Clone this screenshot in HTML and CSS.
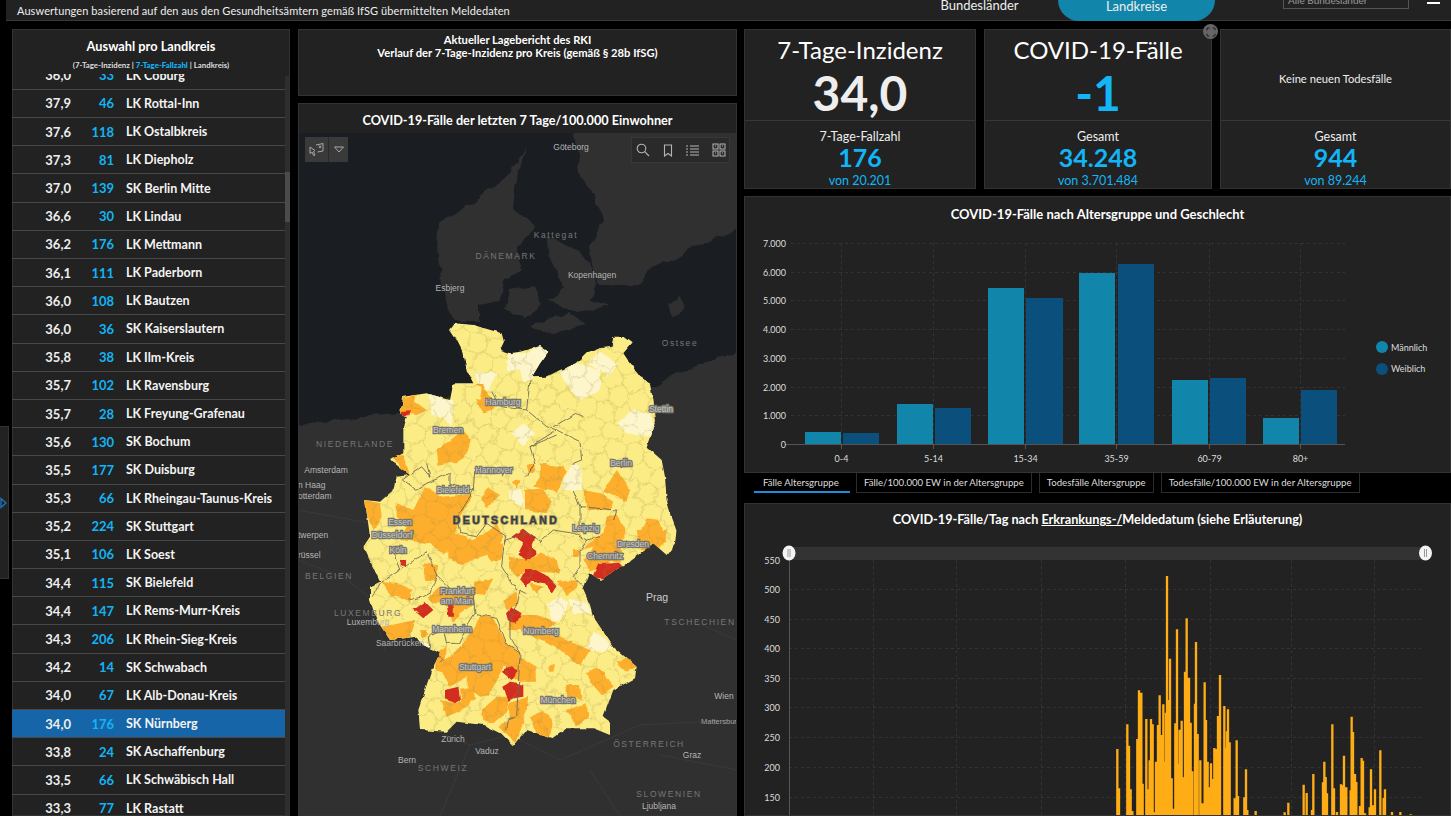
FILE: index.html
```html
<!DOCTYPE html>
<html lang="de">
<head>
<meta charset="utf-8">
<title>COVID-19 Dashboard</title>
<link rel="stylesheet" href="styles.css">
</head>
<body>
<header class="topbar">
  <p class="topbar-text">Auswertungen basierend auf den aus den Gesundheitsämtern gemäß IfSG übermittelten Meldedaten</p>
  <nav class="switch">
    <span class="switch-item">Bundesländer</span>
    <span class="switch-item switch-active">Landkreise</span>
  </nav>
  <div class="select-box">Alle Bundesländer</div>
  <div class="burger"></div>
</header>

<div class="side-tab"><svg width="8" height="12" viewBox="0 0 8 12"><path d="M1 1.500L6 6L1 10.500Z" fill="none" stroke="#1f74c0" stroke-width="1.300"/></svg></div>

<main class="layout">
  <section class="panel list-panel">
    <div class="list-head">
      <h2>Auswahl pro Landkreis</h2>
      <p>(7-Tage-Inzidenz | <b>7-Tage-Fallzahl</b> | Landkreis)</p>
    </div>
    <div class="list-body">
      <div class="rows">
        <div class="rows-inner">
          <div class="row"><span class="r-a">36,0</span><span class="r-b">33</span><span class="r-c">LK Coburg</span></div>
          <div class="row"><span class="r-a">37,9</span><span class="r-b">46</span><span class="r-c">LK Rottal-Inn</span></div>
          <div class="row"><span class="r-a">37,6</span><span class="r-b">118</span><span class="r-c">LK Ostalbkreis</span></div>
          <div class="row"><span class="r-a">37,3</span><span class="r-b">81</span><span class="r-c">LK Diepholz</span></div>
          <div class="row"><span class="r-a">37,0</span><span class="r-b">139</span><span class="r-c">SK Berlin Mitte</span></div>
          <div class="row"><span class="r-a">36,6</span><span class="r-b">30</span><span class="r-c">LK Lindau</span></div>
          <div class="row"><span class="r-a">36,2</span><span class="r-b">176</span><span class="r-c">LK Mettmann</span></div>
          <div class="row"><span class="r-a">36,1</span><span class="r-b">111</span><span class="r-c">LK Paderborn</span></div>
          <div class="row"><span class="r-a">36,0</span><span class="r-b">108</span><span class="r-c">LK Bautzen</span></div>
          <div class="row"><span class="r-a">36,0</span><span class="r-b">36</span><span class="r-c">SK Kaiserslautern</span></div>
          <div class="row"><span class="r-a">35,8</span><span class="r-b">38</span><span class="r-c">LK Ilm-Kreis</span></div>
          <div class="row"><span class="r-a">35,7</span><span class="r-b">102</span><span class="r-c">LK Ravensburg</span></div>
          <div class="row"><span class="r-a">35,7</span><span class="r-b">28</span><span class="r-c">LK Freyung-Grafenau</span></div>
          <div class="row"><span class="r-a">35,6</span><span class="r-b">130</span><span class="r-c">SK Bochum</span></div>
          <div class="row"><span class="r-a">35,5</span><span class="r-b">177</span><span class="r-c">SK Duisburg</span></div>
          <div class="row"><span class="r-a">35,3</span><span class="r-b">66</span><span class="r-c">LK Rheingau-Taunus-Kreis</span></div>
          <div class="row"><span class="r-a">35,2</span><span class="r-b">224</span><span class="r-c">SK Stuttgart</span></div>
          <div class="row"><span class="r-a">35,1</span><span class="r-b">106</span><span class="r-c">LK Soest</span></div>
          <div class="row"><span class="r-a">34,4</span><span class="r-b">115</span><span class="r-c">SK Bielefeld</span></div>
          <div class="row"><span class="r-a">34,4</span><span class="r-b">147</span><span class="r-c">LK Rems-Murr-Kreis</span></div>
          <div class="row"><span class="r-a">34,3</span><span class="r-b">206</span><span class="r-c">LK Rhein-Sieg-Kreis</span></div>
          <div class="row"><span class="r-a">34,2</span><span class="r-b">14</span><span class="r-c">SK Schwabach</span></div>
          <div class="row"><span class="r-a">34,0</span><span class="r-b">67</span><span class="r-c">LK Alb-Donau-Kreis</span></div>
          <div class="row row-selected"><span class="r-a">34,0</span><span class="r-b">176</span><span class="r-c">SK Nürnberg</span></div>
          <div class="row"><span class="r-a">33,8</span><span class="r-b">24</span><span class="r-c">SK Aschaffenburg</span></div>
          <div class="row"><span class="r-a">33,5</span><span class="r-b">66</span><span class="r-c">LK Schwäbisch Hall</span></div>
          <div class="row"><span class="r-a">33,3</span><span class="r-b">77</span><span class="r-c">LK Rastatt</span></div>
        </div>
      </div>
      <div class="scrolltrack"><div class="scrollthumb"></div></div>
    </div>
  </section>

  <div class="mid">
    <section class="panel report">
      <p>Aktueller Lagebericht des RKI</p>
      <p>Verlauf der 7-Tage-Inzidenz pro Kreis (gemäß § 28b IfSG)</p>
    </section>
    <section class="panel map-panel">
      <h2 class="map-title">COVID-19-Fälle der letzten 7 Tage/100.000 Einwohner</h2>
      <div class="map">
        <svg class="map-svg" viewBox="298 133 439 683" width="439" height="683">
          <defs>
            <clipPath id="de"><path d="M285 10L340 15L425 40L432 65L420 90L450 100L480 95L540 78L565 95L540 130L515 172L560 170L600 150L650 130L680 100L720 85L755 80L760 50L790 50L815 70L790 100L810 130L840 170L870 190L880 240L888 300L870 350L860 380L905 420L915 470L920 540L935 590L950 630L945 670L920 705L880 670L800 730L720 780L690 760L670 810L690 855L700 890L760 980L830 1040L825 1075L760 1110L730 1190L750 1205L750 1245L700 1225L620 1225L580 1255L500 1230L460 1280L420 1240L370 1215L290 1205L260 1235L180 1230L175 1170L215 1050L240 1000L190 975L170 950L90 960L50 900L30 840L30 800L60 785L10 680L30 650L15 540L60 545L100 510L110 470L150 465L90 420L130 400L130 330L140 290L120 280L130 230L200 220L270 240L280 190L340 190L320 150L310 100L290 60L270 30Z"/></clipPath>
            <pattern id="mesh" width="60" height="104" patternUnits="userSpaceOnUse" patternTransform="rotate(14)">
              <path class="mesh-line" d="M30 0L60 17V52L30 69L0 52V17ZM30 69V104"/>
            </pattern>
            <filter id="wiggle" filterUnits="userSpaceOnUse" x="-60" y="-60" width="1120" height="1420" color-interpolation-filters="sRGB">
              <feTurbulence type="fractalNoise" baseFrequency=".035" numOctaves="2" seed="4" result="n"/>
              <feDisplacementMap in="SourceGraphic" in2="n" scale="12" xChannelSelector="R" yChannelSelector="G"/>
            </filter>
            <filter id="wiggle-big" filterUnits="userSpaceOnUse" x="-60" y="-60" width="1120" height="1420" color-interpolation-filters="sRGB">
              <feTurbulence type="fractalNoise" baseFrequency=".03" numOctaves="3" seed="9" result="n"/>
              <feDisplacementMap in="SourceGraphic" in2="n" scale="34" xChannelSelector="R" yChannelSelector="G"/>
            </filter>
            <filter id="coast" filterUnits="userSpaceOnUse" x="280" y="120" width="470" height="710" color-interpolation-filters="sRGB">
              <feTurbulence type="fractalNoise" baseFrequency=".06" numOctaves="3" seed="2" result="n"/>
              <feDisplacementMap in="SourceGraphic" in2="n" scale="9" xChannelSelector="R" yChannelSelector="G"/>
            </filter>
          </defs>
          <rect class="water" x="298" y="133" width="439" height="683"/>
          <g filter="url(#coast)">
            <path class="land" d="M280 428L400 412L460 395L640 400L653 387L690 367L760 345V830H280Z"/>
            <path class="land" d="M453 318L445 300L438 260L439 222L470 205L496 187L515 165L526 146L518 170L513 207L536 227L516 247L523 270L505 278L500 300L480 305L480 322L460 322Z"/>
            <path class="land" d="M573 120H760V220L700 245L650 268L640 285L598 285L594 275L589 245L606 220L590 190L579 173Z"/>
            <path class="land" d="M546 238L572 248L590 262L596 285L590 300L612 306L570 312L548 300L562 285L552 262Z"/>
            <path class="land" d="M510 290L535 286L542 305L525 318L506 310Z"/>
            <path class="land" d="M530 324L570 314L585 324L545 334Z"/>
            <path class="land" d="M668 305L680 295L684 310L672 318Z"/>
          </g>
          <path class="border" d="M298 560L345 578L372 600L385 650M298 510L380 525M420 725L470 745L510 735L560 760L640 725L737 720M690 620L737 640M660 755L737 770M470 745L440 816M590 770L620 816"/>
          <g transform="translate(360 320) scale(.33333)">
            <g filter="url(#wiggle)">
              <g clip-path="url(#de)">
                <rect class="y" x="0" y="0" width="990" height="1300"/>
                <g class="cream">
                  <path d="M350 155L410 160L385 210L350 190Z"/>
                  <path d="M445 100L500 100L545 75L565 95L520 175L490 185L480 150L440 155Z"/>
                  <path d="M600 155L650 130L720 150L720 210L660 240L610 180Z"/>
                  <path d="M680 130L720 95L775 130L740 170L720 150Z"/>
                  <path d="M205 220L235 225L250 240L280 240L275 320L250 290L215 285Z"/>
                  <path d="M455 340L490 310L525 340L490 380Z"/>
                  <path d="M610 475L640 430L665 440L665 510L610 510Z"/>
                  <path d="M770 310L820 270L870 280L885 330L860 350L800 340Z"/>
                  <path d="M445 510L480 505L500 565L445 535Z"/>
                  <path d="M160 950L190 960L215 985L185 995L170 970Z"/>
                  <path d="M560 855L600 830L625 850L600 905L575 900Z"/>
                  <path d="M625 840L680 845L695 880L640 880Z"/>
                  <path d="M675 990L705 935L760 980L725 995Z"/>
                </g>
                <g class="o">
                  <path d="M120 280L130 235L170 225L165 245L200 270L170 285Z"/>
                  <path d="M340 195L365 205L360 235L345 240L370 280L400 270L415 245L385 225L370 195Z"/>
                  <path d="M230 385L265 365L290 345L300 320L335 360L320 400L290 430L255 430L235 435Z"/>
                  <path d="M90 410L130 405L150 465L130 465L115 430Z"/>
                  <path d="M500 435L525 430L520 460L505 455Z"/>
                  <path d="M455 485L480 480L470 505Z"/>
                  <path d="M540 430L610 440L620 455L590 520L575 510L520 500L540 470Z"/>
                  <path d="M495 510L550 505L575 545L560 580L495 570Z"/>
                  <path d="M670 510L720 520L760 545L750 570L680 570Z"/>
                  <path d="M770 450L800 490L810 510L800 545L730 515Z"/>
                  <path d="M860 595L900 600L920 670L830 660Z"/>
                  <path d="M15 540L60 550L65 590L45 630L30 610L20 580Z"/>
                  <path d="M110 550L160 570L195 500L250 530L340 520L300 590L285 640L340 660L390 630L410 610L430 650L400 700L330 720L265 690L250 700L205 670L120 660L140 620L110 590Z"/>
                  <path d="M360 530L385 505L420 525L380 565Z"/>
                  <path d="M740 590L770 580L800 640L770 690L740 740L680 720L700 680L660 690L730 640Z"/>
                  <path d="M640 690L660 690L655 710L640 710Z"/>
                </g>
                <g class="o" transform="translate(0 630)">
                  <path d="M265 55L340 55L340 90L300 105L265 85Z"/>
                  <path d="M380 45L430 40L425 85L390 95Z"/>
                  <path d="M190 100L235 105L225 150L195 155Z"/>
                  <path d="M65 155L130 165L155 180L150 220L120 200L90 195Z"/>
                  <path d="M345 155L400 145L375 195L340 190Z"/>
                  <path d="M205 205L240 170L345 185L340 220L300 250L280 280L255 220L220 220Z"/>
                  <path d="M430 210L470 185L475 225L440 240Z"/>
                  <path d="M450 80L500 90L540 70L590 90L600 130L540 125L490 125L470 145L450 115Z"/>
                  <path d="M590 155L650 150L650 175L620 195Z"/>
                  <path d="M505 160L550 170L530 190Z"/>
                  <path d="M450 255L530 255L590 275L560 300L590 310L640 340L690 360L660 410L600 360L560 340L520 320L480 300L445 300Z"/>
                  <path d="M60 290L120 280L165 270L150 320L120 340L80 325Z"/>
                  <path d="M180 300L200 300L205 315L185 320Z"/>
                  <path d="M360 255L400 265L440 340L480 370L470 420L430 410L385 500L360 500L320 470L320 440L270 470L250 430L240 400L270 380L300 350L320 330L345 290Z"/>
                  <path d="M230 370L260 350L255 430L225 420Z"/>
                  <path d="M480 380L530 410L530 455L480 455L460 440Z"/>
                  <path d="M410 500L445 500L445 540L400 580L370 570L365 540Z"/>
                  <path d="M445 520L505 500L500 540L470 640L440 615L415 590L450 570Z"/>
                  <path d="M240 510L290 520L340 490L325 530L285 550L260 560Z"/>
                  <path d="M300 480L340 470L345 510L305 515Z"/>
                  <path d="M510 560L545 545L580 570L570 620L530 610Z"/>
                  <path d="M620 540L680 520L685 560L650 590Z"/>
                  <path d="M615 465L660 465L665 510L620 500Z"/>
                  <path d="M680 430L710 410L735 430L760 470L725 495L695 460Z"/>
                  <path d="M770 395L805 380L830 410L800 425Z"/>
                  <path d="M565 410L585 405L580 425L568 425Z"/>
                  <path d="M670 85L710 70L725 110L690 125Z"/>
                  <path d="M710 20L750 10L790 70L785 95L710 90Z"/>
                  <path d="M830 0L920 0L915 40L880 70L840 60Z"/>
                  <path d="M640 60L655 60L655 80L640 80Z"/>
                </g>
                <g class="r" transform="translate(0 630)">
                  <path d="M455 20L490 -5L525 20L515 45L530 70L500 95L475 70L490 40Z"/>
                  <path d="M480 150L495 120L530 120L560 135L590 165L575 188L555 160L510 155L500 175Z"/>
                  <path d="M695 145L715 100L780 95L795 110L730 145Z"/>
                  <path d="M160 240L195 215L220 240L190 265Z"/>
                  <path d="M260 215L280 215L282 260L265 260Z"/>
                  <path d="M438 250L455 232L485 250L470 278L445 275Z"/>
                  <path d="M425 425L450 410L475 420L455 450Z"/>
                  <path d="M430 470L455 455L490 465L490 500L460 505L445 512Z"/>
                  <path d="M255 480L295 470L300 510L285 520L255 505Z"/>
                  <path d="M122 90L138 90L138 110L122 110Z"/>
                </g>
                <path class="red-single" d="M122 276L150 274L145 286L125 286Z"/>
                <path class="red-single" d="M785 430L795 430L795 445L785 445Z"/>
                <g filter="url(#wiggle-big)">
                  <rect x="-60" y="-60" width="1120" height="1420" fill="url(#mesh)"/>
                </g>
                <path class="state" d="M395 215L420 260L500 270L560 320L590 330L660 365L665 420L640 430M500 270L510 180M590 330L510 380L525 430L500 470M510 380L590 345M670 290L650 280L580 320M640 510L660 560L770 570L760 600M660 560L660 620M200 430L210 470L185 440L130 480L170 510L200 490L270 460L270 490L340 510L345 440M340 510L290 590L300 640L350 650L380 610L440 650L430 690"/>
                <path class="state" transform="translate(0 630)" d="M430 60L440 30L500 5L540 35L580 0L640 10L680 30L720 20M680 30L660 60L660 110L640 140L680 180M430 60L425 110L470 180M100 70L120 120L60 160L40 200M120 120L200 65L230 135L210 190L190 200L145 210M230 135L270 175L340 195L345 250L320 290L300 340L260 340L250 300L205 320L210 360L250 390L240 400M345 250L365 255L410 265L440 340L480 370L470 560L445 570L440 600M480 370L450 320L450 260L470 230L480 180L500 190"/>
              </g>
            </g>
          </g>
          <text class="lbl" x="571" y="150" text-anchor="middle">Göteborg</text>
          <text class="lbl-c" x="556" y="238" text-anchor="middle">Kattegat</text>
          <text class="lbl-c" x="506" y="259" text-anchor="middle">DÄNEMARK</text>
          <text class="lbl" x="592" y="278" text-anchor="middle">Kopenhagen</text>
          <text class="lbl" x="450" y="291" text-anchor="middle">Esbjerg</text>
          <text class="lbl-c" x="680" y="346" text-anchor="middle">Ostsee</text>
          <text class="lbl-h" x="503" y="405" text-anchor="middle">Hamburg</text>
          <text class="lbl-h" x="661" y="412" text-anchor="middle">Stettin</text>
          <text class="lbl-h" x="448" y="433" text-anchor="middle">Bremen</text>
          <text class="lbl-c" x="355" y="447" text-anchor="middle">NIEDERLANDE</text>
          <text class="lbl-h" x="621" y="466" text-anchor="middle">Berlin</text>
          <text class="lbl-h" x="494" y="473" text-anchor="middle">Hannover</text>
          <text class="lbl" x="326" y="473" text-anchor="middle">Amsterdam</text>
          <text class="lbl" x="298" y="488">n Haag</text>
          <text class="lbl" x="298" y="499">otterdam</text>
          <text class="lbl-h" x="453" y="493" text-anchor="middle">Bielefeld</text>
          <text class="lbl-d" x="506" y="524" text-anchor="middle">DEUTSCHLAND</text>
          <text class="lbl-h" x="400" y="525" text-anchor="middle">Essen</text>
          <text class="lbl-h" x="392" y="538" text-anchor="middle">Düsseldorf</text>
          <text class="lbl" x="298" y="538">twerpen</text>
          <text class="lbl-h" x="586" y="531" text-anchor="middle">Leipzig</text>
          <text class="lbl-h" x="633" y="547" text-anchor="middle">Dresden</text>
          <text class="lbl-h" x="398" y="553" text-anchor="middle">Köln</text>
          <text class="lbl" x="298" y="558">rüssel</text>
          <text class="lbl-h" x="605" y="559" text-anchor="middle">Chemnitz</text>
          <text class="lbl-c" x="329" y="579" text-anchor="middle">BELGIEN</text>
          <text class="lbl-h" x="457" y="594" text-anchor="middle">Frankfurt</text>
          <text class="lbl-h" x="457" y="604" text-anchor="middle">am Main</text>
          <text class="lbl-big" x="657" y="601" text-anchor="middle">Prag</text>
          <text class="lbl-c" x="368" y="616" text-anchor="middle">LUXEMBURG</text>
          <text class="lbl" x="368" y="625" text-anchor="middle">Luxemburg</text>
          <text class="lbl-c" x="700" y="625" text-anchor="middle">TSCHECHIEN</text>
          <text class="lbl-h" x="452" y="632" text-anchor="middle">Mannheim</text>
          <text class="lbl-h" x="541" y="634" text-anchor="middle">Nürnberg</text>
          <text class="lbl" x="400" y="646" text-anchor="middle">Saarbrücken</text>
          <text class="lbl-h" x="475" y="670" text-anchor="middle">Stuttgart</text>
          <text class="lbl" x="724" y="699" text-anchor="middle">Wien</text>
          <text class="lbl-h" x="558" y="703" text-anchor="middle">München</text>
          <text class="lbl-s" x="721" y="724" text-anchor="middle">Mattersburg</text>
          <text class="lbl" x="453" y="742" text-anchor="middle">Zürich</text>
          <text class="lbl-c" x="649" y="747" text-anchor="middle">ÖSTERREICH</text>
          <text class="lbl" x="487" y="754" text-anchor="middle">Vaduz</text>
          <text class="lbl" x="692" y="758" text-anchor="middle">Graz</text>
          <text class="lbl" x="407" y="763" text-anchor="middle">Bern</text>
          <text class="lbl-c" x="443" y="771" text-anchor="middle">SCHWEIZ</text>
          <text class="lbl-c" x="669" y="797" text-anchor="middle">SLOWENIEN</text>
          <text class="lbl" x="659" y="809" text-anchor="middle">Ljubljana</text>
        </svg>
        <div class="map-tool-left">
          <span class="tool-cell"><svg width="16" height="16" viewBox="0 0 16 16" fill="none" stroke="#a8a8a8" stroke-width="1"><path d="M1 5L6 8.500L4.500 9.500L6 13L4.500 13.500L3 10L1 11.500Z"/><path d="M7 3L14 1.500V9L8.500 10M10 3.500L12 6M12 3.500L10 6" /></svg></span>
          <span class="tool-cell tool-cell-small"><svg width="10" height="7" viewBox="0 0 10 7" fill="none" stroke="#a8a8a8"><path d="M.5 1H9.500L5 6Z"/></svg></span>
        </div>
        <div class="map-tool-right">
          <svg width="14" height="14" viewBox="0 0 14 14" fill="none" stroke="#b5b5b5" stroke-width="1.100"><circle cx="5.500" cy="5.500" r="4.300"/><path d="M8.700 8.700L13 13"/></svg>
          <svg width="10" height="13" viewBox="0 0 10 13" fill="none" stroke="#b5b5b5" stroke-width="1.100"><path d="M1.500 1H8.500V12L5 9.500L1.500 12Z"/></svg>
          <svg width="13" height="13" viewBox="0 0 13 13" fill="none" stroke="#b5b5b5" stroke-width="1.200"><path d="M4 2H13M4 5H13M4 8H13M4 11H13M0 2H2M0 5H2M0 8H2M0 11H2"/></svg>
          <svg width="14" height="14" viewBox="0 0 14 14" fill="none" stroke="#b5b5b5"><rect x="1" y="1" width="5" height="5"/><rect x="8" y="1" width="5" height="5"/><rect x="1" y="8" width="5" height="5"/><rect x="8" y="8" width="5" height="5"/><path d="M3 3H4M10 3H11M3 10H4M10 10H11"/></svg>
        </div>
      </div>
    </section>
  </div>

  <div class="right">
    <div class="kpis">
      <section class="panel kpi">
        <div class="kpi-top">
          <h3 class="kpi-title">7-Tage-Inzidenz</h3>
          <div class="kpi-big">34,0</div>
        </div>
        <div class="kpi-bottom">
          <div class="kpi-label">7-Tage-Fallzahl</div>
          <div class="kpi-value">176</div>
          <div class="kpi-sub">von 20.201</div>
        </div>
      </section>
      <section class="panel kpi">
        <div class="kpi-top">
          <h3 class="kpi-title">COVID-19-Fälle</h3>
          <div class="kpi-big kpi-big-blue">-1</div>
        </div>
        <div class="kpi-bottom">
          <div class="kpi-label">Gesamt</div>
          <div class="kpi-value">34.248</div>
          <div class="kpi-sub">von 3.701.484</div>
        </div>
      </section>
      <section class="panel kpi">
        <div class="kpi-top kpi-top-center">
          <div class="kpi-note">Keine neuen Todesfälle</div>
        </div>
        <div class="kpi-bottom">
          <div class="kpi-label">Gesamt</div>
          <div class="kpi-value">944</div>
          <div class="kpi-sub">von 89.244</div>
        </div>
      </section>
      <div class="expand"><svg width="10" height="10" viewBox="0 0 10 10" fill="none" stroke="#222" stroke-width="1"><path d="M1 3.500V1H3.500M6.500 1H9V3.500M9 6.500V9H6.500M3.500 9H1V6.500"/></svg></div>
    </div>

    <section class="panel age-chart">
      <h2 class="chart-title">COVID-19-Fälle nach Altersgruppe und Geschlecht</h2>
      <svg class="chart-svg" viewBox="745 234 705 238" width="705" height="238">
        <path class="grid" d="M791 243.500H1345M791 272.500H1345M791 300.500H1345M791 329.500H1345M791 358.500H1345M791 387.500H1345M791 415.500H1345M841.500 243V444M933.500 243V444M1025.500 243V444M1116.500 243V444M1209.500 243V444M1300.500 243V444"/>
        <g class="bar-m">
          <rect x="805" y="432" width="36" height="12"/>
          <rect x="897" y="404" width="36" height="40"/>
          <rect x="988" y="288" width="36" height="156"/>
          <rect x="1079" y="273" width="36" height="171"/>
          <rect x="1172" y="380" width="36" height="64"/>
          <rect x="1263" y="418" width="36" height="26"/>
        </g>
        <g class="bar-f">
          <rect x="843" y="433" width="36" height="11"/>
          <rect x="935" y="408" width="36" height="36"/>
          <rect x="1026" y="298" width="37" height="146"/>
          <rect x="1118" y="264" width="36" height="180"/>
          <rect x="1210" y="378" width="36" height="66"/>
          <rect x="1301" y="390" width="36" height="54"/>
        </g>
        <path class="axis" d="M785 444.500H1345M841.500 444V449M933.500 444V449M1025.500 444V449M1116.500 444V449M1209.500 444V449M1300.500 444V449"/>
        <g class="tick" text-anchor="end">
          <text x="786" y="247">7.000</text>
          <text x="786" y="276">6.000</text>
          <text x="786" y="304">5.000</text>
          <text x="786" y="333">4.000</text>
          <text x="786" y="362">3.000</text>
          <text x="786" y="391">2.000</text>
          <text x="786" y="419">1.000</text>
          <text x="786" y="448">0</text>
        </g>
        <g class="tick" text-anchor="middle">
          <text x="841.500" y="462">0-4</text>
          <text x="933.500" y="462">5-14</text>
          <text x="1025.500" y="462">15-34</text>
          <text x="1116.500" y="462">35-59</text>
          <text x="1209.500" y="462">60-79</text>
          <text x="1300.500" y="462">80+</text>
        </g>
        <circle class="dot-m" cx="1382" cy="347" r="6"/>
        <circle class="dot-f" cx="1382" cy="369" r="6"/>
        <text class="tick" x="1391" y="351">Männlich</text>
        <text class="tick" x="1391" y="372">Weiblich</text>
      </svg>
    </section>

    <nav class="tabs">
      <span class="tab tab-active">Fälle Altersgruppe</span>
      <span class="tab">Fälle/100.000 EW in der Altersgruppe</span>
      <span class="tab">Todesfälle Altersgruppe</span>
      <span class="tab">Todesfälle/100.000 EW in der Altersgruppe</span>
    </nav>

    <section class="panel day-chart">
      <h2 class="chart-title day-title">COVID-19-Fälle/Tag nach <u>Erkrankungs-/</u>Meldedatum (siehe Erläuterung)</h2>
      <svg class="chart-svg" viewBox="745 532 705 284" width="705" height="284">
        <rect class="slider" x="789" y="547" width="636" height="13"/>
        <path class="grid" d="M789 589.500H1425M789 619.500H1425M789 648.500H1425M789 678.500H1425M789 707.500H1425M789 737.500H1425M789 767.500H1425M789 797.500H1425M873.500 560V816M956.500 560V816M1041.500 560V816M1125.500 560V816M1210.500 560V816M1291.500 560V816M1374.500 560V816"/>
        <path class="axis" d="M789.500 560V816"/>
        <g class="tick" text-anchor="end">
          <text x="780" y="564">550</text>
          <text x="780" y="593">500</text>
          <text x="780" y="623">450</text>
          <text x="780" y="652">400</text>
          <text x="780" y="682">350</text>
          <text x="780" y="711">300</text>
          <text x="780" y="741">250</text>
          <text x="780" y="771">200</text>
          <text x="780" y="801">150</text>
        </g>
        <g transform="translate(1080 570) scale(.33333)">
          <path class="day-bars" d="M112 537V738M117 655V738M142 463V738M147 527V738M152 658V738M157 723V738M172 507V738M177 361V738M180 487V738M184 368V738M188 641V738M199 447V738M204 658V738M209 571V738M213 447V738M218 463V738M222 727V738M228 575V738M234 465V738M239 376V738M243 495V738M247 505V738M250 403V738M254 575V738M258 428V738M261 18V738M265 390V738M270 266V738M275 625V738M280 716V738M286 460V738M291 178V738M296 581V738M299 479V738M305 452V738M309 622V738M315 305V738M320 145V738M324 378V738M327 323V738M332 458V738M337 604V738M345 401V738M348 216V738M353 492V738M361 571V738M367 700V738M371 706V738M374 337V738M378 450V738M383 575V738M387 652V738M393 580V738M398 627V738M403 534V738M408 537V738M414 438V738M420 315V738M433 408V738M437 533V738M441 484V738M444 418V738M449 517V738M464 685V738M470 511V738M474 678V738M493 682V738M498 598V738M502 720V738M527 723V738M614 727V738M625 698V738M671 644V738M680 669V738M696 720V738M700 612V738M729 637V738M733 575V738M737 621V738M741 670V738M757 463V738M762 655V738M771 726V738M783 643V738M787 646V738M792 557V738M799 652V738M812 661V738M815 440V738M819 486V738M825 612V738M829 636V738M840 708V738M845 564V738M849 572V738M855 730V738M869 712V738M873 598V738M878 706V738M885 658V738M901 541V738M911 684V738M915 658V738M936 726V738M961 726V738M992 733V738"/>
        </g>
        <ellipse class="handle" cx="789" cy="553" rx="6.500" ry="7.500"/>
        <ellipse class="handle" cx="1425.500" cy="553" rx="6.500" ry="7.500"/>
        <path class="handle-mark" d="M788 549V557M790 549V557M1424.500 549V557M1426.500 549V557"/>
      </svg>
    </section>
  </div>
</main>
</body>
</html>
```
FILE: styles.css
```css
* { box-sizing: border-box; }
html, body { margin: 0; padding: 0; }
body {
  width: 1451px;
  height: 816px;
  overflow: hidden;
  background: #000;
  color: #fff;
  font-family: Lato, "Open Sans", "Liberation Sans", sans-serif;
  position: relative;
}
h2, h3, p { margin: 0; }

.topbar {
  height: 21px;
  margin-left: 6px;
  background: #222;
  border-bottom: 1px solid #3a3a3a;
  display: flex;
  align-items: center;
  position: relative;
}
.topbar-text { font-size: 11px; padding-left: 11px; color: #eee; letter-spacing: .09px; margin-top: 1px; white-space: nowrap; }
.switch { position: absolute; left: 895px; top: 0; display: flex; align-items: flex-start; }
.switch-item { display: block; width: 157px; height: 21px; text-align: center; font-size: 13px; color: #eee; line-height: 11px; }
.switch-active { background: #1285ab; border-radius: 0 0 22px 22px; line-height: 12px; }
.select-box { position: absolute; left: 1277px; top: -8px; width: 126px; height: 17px; border: 1px solid #555; font-size: 10px; color: #999; line-height: 14px; padding-left: 4px; }
.burger { position: absolute; left: 1421px; top: 0; width: 13px; height: 4px; border-bottom: 2px solid #fff; }

.side-tab { position: absolute; left: 0; top: 426px; width: 9px; height: 153px; background: #222; border: 1px solid #333; border-left: 0; display: flex; align-items: center; }

.layout {
  display: grid;
  grid-template-columns: 278px 439px 707px;
  column-gap: 8px;
  padding: 8px 0 0 12px;
  height: 795px;
  width: 1451px;
}
.panel { background: #222; border: 1px solid #333; }

.list-panel { display: flex; flex-direction: column; height: 787px; }
.list-head { height: 44px; text-align: center; padding-top: 8px; flex: none; }
.list-head h2 { font-size: 12.800px; font-weight: 700; line-height: 16px; }
.list-head p { font-size: 7.850px; font-weight: 700; margin-top: 6px; color: #ddd; line-height: 10px; }
.list-head b { color: #12b5f5; }
.list-body { flex: 1; display: flex; min-height: 0; }
.rows { width: 273px; overflow: hidden; margin-left: -1px; flex: none; }
.rows-inner { margin-top: -12.300px; }
.row {
  height: 28.200px;
  display: grid;
  grid-template-columns: 59px 43px 1fr;
  align-items: center;
  border-bottom: 1px solid #484848;
  font-size: 13px;
  font-weight: 700;
}
.r-a { text-align: right; color: #eee; }
.r-b { text-align: right; color: #12b5f5; }
.r-c { padding-left: 12px; color: #f4f4f4; white-space: nowrap; font-size: 12.500px; }
.row-selected { background: #1565a8; }
.scrolltrack { width: 5px; margin-top: 2px; background: #2e2e2e; }
.scrollthumb { width: 5px; height: 50px; margin-top: 96px; background: #4b4b4b; }

.mid { display: flex; flex-direction: column; gap: 7px; height: 787px; width: 439px; }
.report { height: 67px; text-align: center; font-size: 11.200px; font-weight: 700; line-height: 13px; padding-top: 3px; flex: none; }
.map-panel { flex: 1; display: flex; flex-direction: column; min-height: 0; }
.map-title { font-size: 12.700px; font-weight: 700; text-align: center; height: 29px; line-height: 33px; flex: none; }
.map { position: relative; flex: 1; overflow: hidden; }
.map-svg { display: block; margin: 0 -1px; }
.water { fill: #1a1e23; }
.land { fill: #303030; }
.border { fill: none; stroke: #3a3a3a; stroke-width: 1; }
.y { fill: #fbec85; }
.cream path { fill: #fdf6cc; }
.o path { fill: #fdae2d; }
.r path, .red-single { fill: #d32d20; }
.mesh-line { fill: none; stroke: #a08c3c; stroke-opacity: .6; stroke-width: 1.700; }
.state { fill: none; stroke: #6b6654; stroke-width: 2.600; stroke-linejoin: round; }
.map-svg text { font-family: "Liberation Sans", sans-serif; }
.lbl { font-size: 8.500px; fill: #b5b5b5; }
.lbl-s { font-size: 7.500px; fill: #a5a5a5; }
.lbl-big { font-size: 10.500px; fill: #ccc; }
.lbl-c { font-size: 8.500px; fill: #777; letter-spacing: 1.600px; }
.lbl-h { font-size: 8.500px; fill: #c8c8c8; stroke: #77776e; stroke-width: 2.500px; paint-order: stroke; }
.lbl-d { font-size: 10.500px; font-weight: 700; fill: #3c3c3a; letter-spacing: 2.400px; stroke: #8f8a6c; stroke-width: 1.500px; paint-order: stroke; }
.map-tool-left { position: absolute; left: 6px; top: 4px; display: flex; height: 25px; background: #3a3a3a; }
.tool-cell { width: 24px; height: 25px; display: flex; align-items: center; justify-content: center; border-right: 1px solid #2a2a2a; }
.tool-cell-small { width: 19px; border-right: 0; }
.map-tool-right { position: absolute; left: 332px; top: 4px; width: 99px; height: 26px; background: #2a2a2a; border: 1px solid #383838; display: flex; align-items: center; gap: 13px; padding-left: 4px; }

.right { display: flex; flex-direction: column; width: 707px; height: 787px; margin-left: -1px; }
.kpis { display: grid; grid-template-columns: 232px 228px 231px; column-gap: 8px; height: 159px; flex: none; position: relative; }
.kpi { display: flex; flex-direction: column; text-align: center; }
.kpi-top { height: 91px; border-bottom: 1px solid #383838; flex: none; }
.kpi-top-center { display: flex; align-items: center; justify-content: center; padding-top: 6px; }
.kpi-title { font-size: 24px; font-weight: 400; line-height: 30px; margin-top: 5px; }
.kpi-big { font-size: 48px; font-weight: 700; line-height: 52px; color: #eee; margin-top: 2px; }
.kpi-big-blue { color: #12b5f5; }
.kpi-note { font-size: 11.200px; color: #eee; }
.kpi-label { font-size: 12.500px; line-height: 15px; margin-top: 8px; color: #eee; }
.kpi-value { font-size: 25px; font-weight: 700; line-height: 30px; color: #12b5f5; margin-top: -2px; }
.kpi-sub { font-size: 12.500px; line-height: 15px; color: #12b5f5; margin-top: 1px; }
.expand { position: absolute; left: 459px; top: -5px; width: 15px; height: 15px; border-radius: 50%; background: #666; display: flex; align-items: center; justify-content: center; }

.age-chart { height: 277px; margin-top: 8px; flex: none; }
.chart-title { font-size: 13px; font-weight: 700; text-align: center; height: 37px; line-height: 35px; }
.chart-svg { display: block; }
.chart-svg text { font-family: Lato, "Liberation Sans", sans-serif; }
.tick { font-size: 9px; fill: #ddd; }
.grid { fill: none; stroke: #333; stroke-width: 1; stroke-dasharray: 3 3; }
.axis { fill: none; stroke: #555; stroke-width: 1; }
.bar-m rect { fill: #1285ab; }
.bar-f rect { fill: #0b4f7d; }
.dot-m { fill: #1285ab; }
.dot-f { fill: #0b4f7d; }

.tabs { height: 20px; display: flex; gap: 7px; padding-left: 10px; flex: none; }
.tab { display: block; height: 20px; padding: 0 7px; font-size: 9.600px; line-height: 19px; color: #ddd; border: 1px solid #2c2c2c; border-top: 0; background: #000; white-space: nowrap; }
.tab-active { border: 0; border-bottom: 2px solid #1a8fe0; padding: 0 9px; width: 96px; margin-right: -1px; }

.day-chart { margin-top: 10px; flex: 1; min-height: 0; overflow: hidden; }
.day-title { height: 28px; line-height: 30px; font-size: 12.700px; }
.slider { fill: #333; }
.day-bars { fill: none; stroke: #ffad14; stroke-width: 7; }
.handle { fill: #f4f4f4; }
.handle-mark { fill: none; stroke: #999; stroke-width: 1; }
```
